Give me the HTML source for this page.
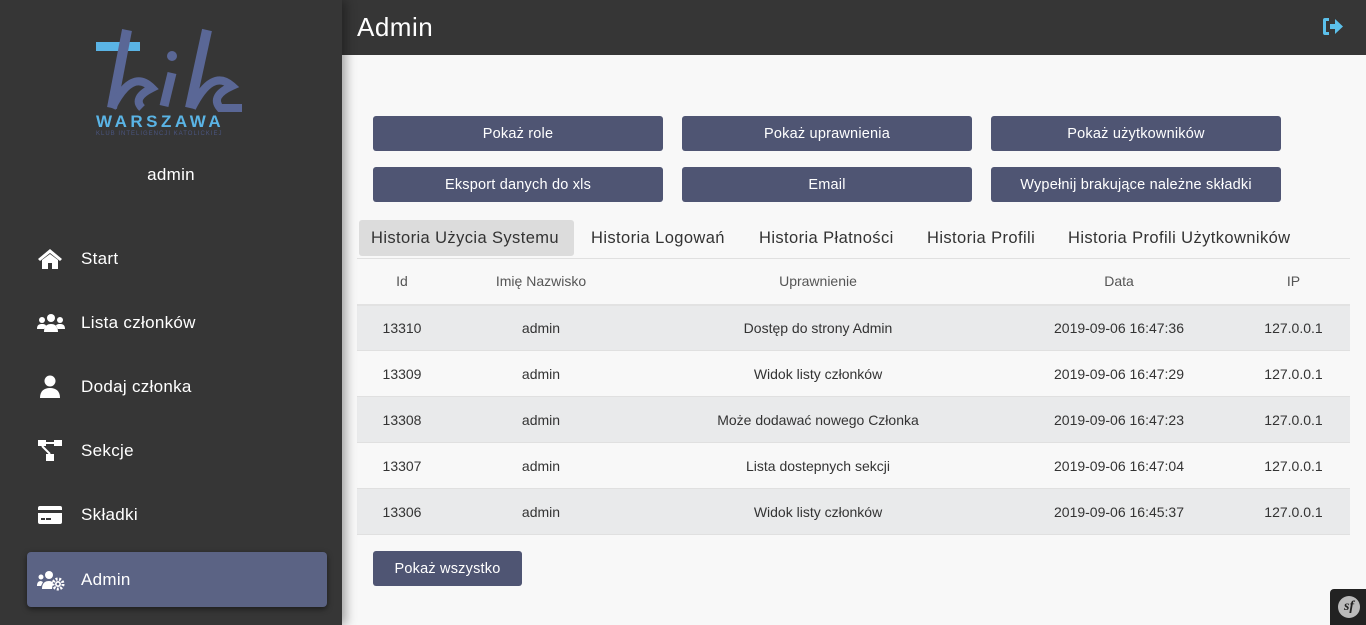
<!DOCTYPE html>
<html><head><meta charset="utf-8"><style>
*{box-sizing:border-box;margin:0;padding:0}
body{width:1366px;height:625px;overflow:hidden;background:#f8f8f8;font-family:"Liberation Sans",sans-serif;position:relative}
.side{position:absolute;left:0;top:0;width:342px;height:625px;background:#363636;box-shadow:4px 0 10px rgba(0,0,0,.35);z-index:2}
.top{position:absolute;left:0;top:0;width:1366px;height:55px;background:#363636}
.title{position:absolute;left:357px;top:12px;color:#fff;font-size:26px;letter-spacing:.5px}
.user{position:absolute;top:165px;width:342px;text-align:center;color:#fff;font-size:17px;letter-spacing:.3px}
.nav{position:absolute;left:27px;width:300px;height:55px;color:#fff;font-size:17px;display:flex;align-items:center;letter-spacing:.3px}
.nav svg{position:absolute;left:10px}
.nav span{position:absolute;left:54px}
.nav.act{background:#5b6384;border-radius:4px;box-shadow:0 2px 6px rgba(0,0,0,.5)}
.btn{position:absolute;width:290px;height:35px;background:#4f5573;color:#fff;font-size:14.5px;border-radius:3px;display:flex;align-items:center;justify-content:center;letter-spacing:.2px}
.tab{position:absolute;top:220px;height:36px;font-size:16.5px;color:#333;display:flex;align-items:center;padding:0 12px;letter-spacing:.4px}
table{position:absolute;left:357px;top:258px;width:993px;border-collapse:collapse;font-size:14px;color:#333;border-top:1px solid #e0e0e0}
td,th{text-align:center;height:46px}
th{font-weight:normal;color:#555;height:46px;border-bottom:2px solid #e2e2e2}
tr.s td{background:#e9eaeb}
td{border-bottom:1px solid #e0e0e0}
</style></head><body>
<div class="top"></div>
<div class="title">Admin</div>
<svg style="position:absolute;left:1322px;top:17px" width="21" height="19" viewBox="0 0 21 19"><path d="M7 1H3a2 2 0 0 0-2 2v13a2 2 0 0 0 2 2h4v-3H4V4h3z" fill="#5bc0eb"/><path d="M8 7h5V2l8 7.5-8 7.5v-5H8z" fill="#5bc0eb"/></svg>
<div class="side">
<svg style="position:absolute;left:92px;top:28px" width="156" height="110" viewBox="0 0 156 110">
<rect x="4" y="14" width="44" height="9" fill="#5ab4e5"/>
<path d="M35 2 L20 80" stroke="#5a6796" stroke-width="10" fill="none"/>
<path d="M20 80 Q40 40 60 60 Q40 70 50 80" stroke="#5a6796" stroke-width="8" fill="none"/>
<circle cx="80" cy="28" r="5" fill="#5a6796"/>
<path d="M80 45 L72 78" stroke="#5a6796" stroke-width="9"/>
<path d="M115 2 L98 80" stroke="#5a6796" stroke-width="10"/>
<path d="M100 80 Q120 40 140 58 Q118 68 128 80 L150 80" stroke="#5a6796" stroke-width="8" fill="none"/>
<text x="4" y="99" fill="#5ab4e5" font-size="17" font-weight="bold" letter-spacing="3.5" font-family="Liberation Sans">WARSZAWA</text>
<text x="4" y="107" fill="#4a5580" font-size="6" letter-spacing="1" font-family="Liberation Sans">KLUB INTELIGENCJI KATOLICKIEJ</text>
</svg>
<div class="user">admin</div>
<div class="nav" style="top:231px"><svg width="26" height="22" viewBox="0 0 26 22"><path d="M13 1L1 11l2 2 10-8 10 8 2-2z M5 12v9h6v-6h4v6h6v-9l-8-6z" fill="#fff"/></svg><span>Start</span></div>
<div class="nav" style="top:295px"><svg width="28" height="20" viewBox="0 0 28 20"><circle cx="14" cy="5" r="4" fill="#fff"/><circle cx="5" cy="7" r="3" fill="#fff"/><circle cx="23" cy="7" r="3" fill="#fff"/><path d="M7 19c0-6 3-8 7-8s7 2 7 8z M0 16c0-4 2-5 5-5s4 1 4 2l-2 3z M28 16c0-4-2-5-5-5s-4 1-4 2l2 3z" fill="#fff"/></svg><span>Lista członków</span></div>
<div class="nav" style="top:359px"><svg width="26" height="24" viewBox="0 0 26 24"><circle cx="13" cy="6" r="5.5" fill="#fff"/><path d="M3 23c0-7 4-10 10-10s10 3 10 10z" fill="#fff"/></svg><span>Dodaj członka</span></div>
<div class="nav" style="top:423px"><svg width="26" height="24" viewBox="0 0 26 24"><rect x="1" y="1" width="8" height="6" fill="#fff"/><rect x="17" y="1" width="8" height="6" fill="#fff"/><rect x="9" y="15" width="8" height="7" fill="#fff"/><path d="M9 4h8M5 7l8 8" stroke="#fff" stroke-width="2"/></svg><span>Sekcje</span></div>
<div class="nav" style="top:487px"><svg width="26" height="22" viewBox="0 0 26 22"><rect x="1" y="2" width="24" height="18" rx="2" fill="#fff"/><rect x="1" y="6" width="24" height="3" fill="#363636"/><rect x="4" y="14" width="4" height="2" fill="#363636"/><rect x="9" y="14" width="5" height="2" fill="#363636"/></svg><span>Składki</span></div>
<div class="nav act" style="top:552px"><svg width="28" height="22" viewBox="0 0 28 22"><circle cx="12" cy="6" r="4" fill="#fff"/><circle cx="4" cy="8" r="2.5" fill="#fff"/><path d="M5 20c0-6 3-8 7-8 2 0 3 1 4 1l-1 7z M0 17c0-3 1-5 4-5l2 1-2 4z" fill="#fff"/><circle cx="21" cy="15" r="5" fill="none" stroke="#fff" stroke-width="3" stroke-dasharray="2 1.5"/><circle cx="21" cy="15" r="3" fill="#fff"/><circle cx="21" cy="15" r="1.3" fill="#5b6384"/></svg><span>Admin</span></div>
</div>
<div class="btn" style="left:373px;top:116px">Pokaż role</div>
<div class="btn" style="left:682px;top:116px">Pokaż uprawnienia</div>
<div class="btn" style="left:991px;top:116px">Pokaż użytkowników</div>
<div class="btn" style="left:373px;top:167px">Eksport danych do xls</div>
<div class="btn" style="left:682px;top:167px">Email</div>
<div class="btn" style="left:991px;top:167px">Wypełnij brakujące należne składki</div>
<div class="tab" style="left:359px;background:#dcdcdc;border-radius:3px;width:215px">Historia Użycia Systemu</div>
<div class="tab" style="left:579px">Historia Logowań</div>
<div class="tab" style="left:747px">Historia Płatności</div>
<div class="tab" style="left:915px">Historia Profili</div>
<div class="tab" style="left:1056px">Historia Profili Użytkowników</div>
<table>
<tr><th style="width:90px">Id</th><th style="width:188px">Imię Nazwisko</th><th style="width:366px">Uprawnienie</th><th style="width:236px">Data</th><th>IP</th></tr>
<tr class="s"><td>13310</td><td>admin</td><td>Dostęp do strony Admin</td><td>2019-09-06 16:47:36</td><td>127.0.0.1</td></tr>
<tr><td>13309</td><td>admin</td><td>Widok listy członków</td><td>2019-09-06 16:47:29</td><td>127.0.0.1</td></tr>
<tr class="s"><td>13308</td><td>admin</td><td>Może dodawać nowego Członka</td><td>2019-09-06 16:47:23</td><td>127.0.0.1</td></tr>
<tr><td>13307</td><td>admin</td><td>Lista dostepnych sekcji</td><td>2019-09-06 16:47:04</td><td>127.0.0.1</td></tr>
<tr class="s"><td>13306</td><td>admin</td><td>Widok listy członków</td><td>2019-09-06 16:45:37</td><td>127.0.0.1</td></tr>
</table>
<div class="btn" style="left:373px;top:551px;width:149px">Pokaż wszystko</div>
<div style="position:absolute;left:1330px;top:589px;width:36px;height:36px;background:#222;border-radius:4px 0 0 0"><div style="position:absolute;left:8px;top:7px;width:22px;height:22px;border-radius:50%;background:#bbb;color:#222;font:italic bold 14px 'Liberation Serif',serif;text-align:center;line-height:22px">sf</div></div>
</body></html>
